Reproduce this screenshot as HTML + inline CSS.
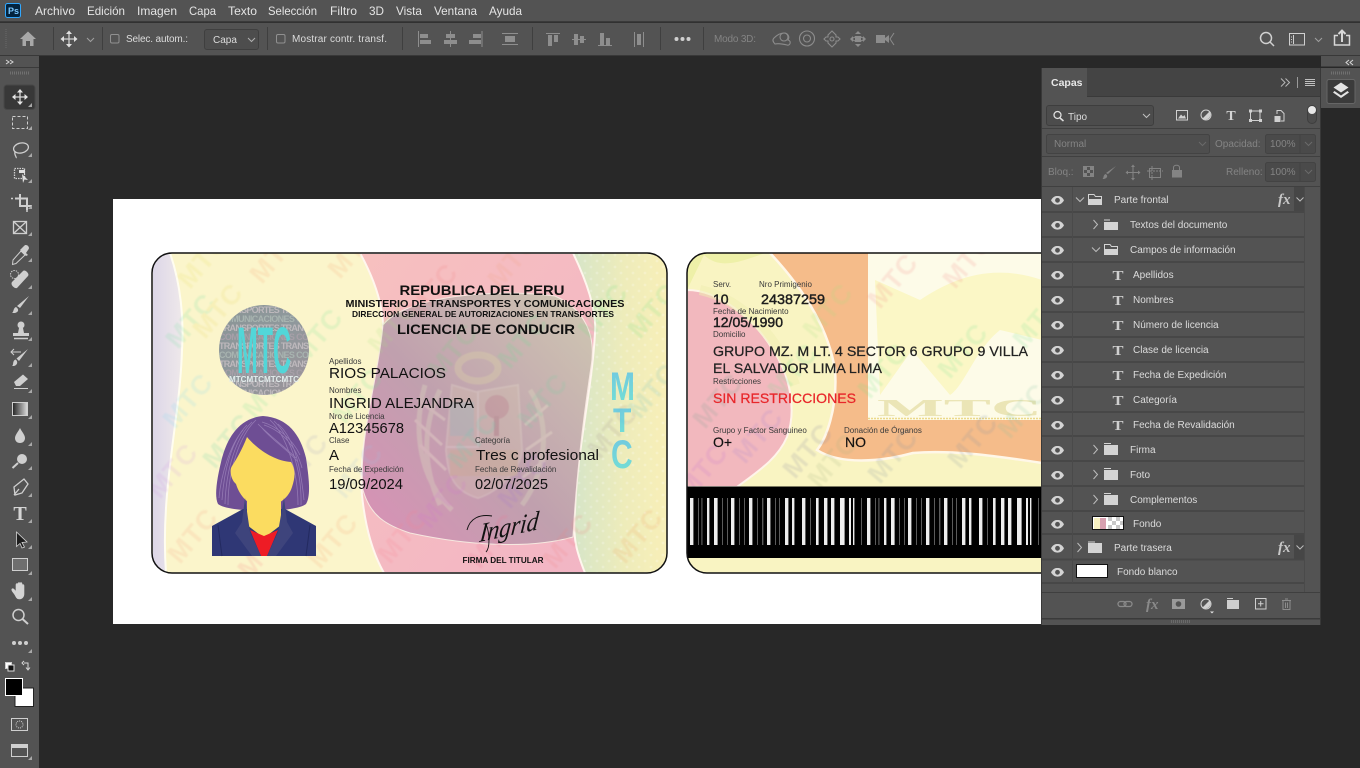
<!DOCTYPE html>
<html lang="es"><head><meta charset="utf-8"><title>Photoshop</title>
<style>
html,body{margin:0;padding:0;background:#282828;width:1360px;height:768px;overflow:hidden}
svg{display:block;position:absolute;left:0;top:0}
text{font-family:"Liberation Sans",sans-serif}
.m{font-size:12px;fill:#e4e4e4}
.o{font-size:10px;fill:#dcdcdc}
.d{font-size:10px;fill:#848484}
.l{font-size:10px;fill:#dcdcdc}
.lab{font-size:8px;fill:#3a3a3a}
.val{font-size:15px;fill:#111}
.i{fill:none;stroke:#cfcfcf;stroke-width:1.3}
.sep{stroke:#3f3f3f;stroke-width:1}
.wf text{font-size:27px;font-weight:700;letter-spacing:1px}
.sf{font-family:"Liberation Serif",serif}
</style></head><body>
<svg width="1360" height="768" viewBox="0 0 1360 768" xmlns="http://www.w3.org/2000/svg">
<defs>
<clipPath id="cf"><rect x="152" y="253" width="515" height="320" rx="20"/></clipPath>
<clipPath id="cb"><rect x="687" y="253" width="500" height="320" rx="20"/></clipPath>
<clipPath id="hc"><circle cx="264" cy="350" r="45"/></clipPath>
<linearGradient id="mv" x1="0" y1="1" x2="1" y2="0"><stop offset="0" stop-color="#da90b6"/><stop offset=".45" stop-color="#c0a0ae"/><stop offset="1" stop-color="#cfc8b2"/></linearGradient>
<linearGradient id="pk" x1="0" y1="0" x2="1" y2="1"><stop offset="0" stop-color="#f7c0bf"/><stop offset="1" stop-color="#f2b5c5"/></linearGradient>
<linearGradient id="rg" x1="0" y1="0" x2="1" y2="0"><stop offset="0" stop-color="#d6e5c8"/><stop offset=".55" stop-color="#eeecba"/><stop offset="1" stop-color="#f8efb8"/></linearGradient>
<linearGradient id="lv" x1="0" y1="0" x2="1" y2="0"><stop offset="0" stop-color="#dcd6e8"/><stop offset="1" stop-color="#efe9ea"/></linearGradient>
<linearGradient id="mt" x1="0" y1="0" x2="0" y2="1"><stop offset="0" stop-color="#5cc0e8"/><stop offset="1" stop-color="#5fe0d8"/></linearGradient>
<linearGradient id="hg" x1="0" y1="0" x2="1" y2="1"><stop offset="0" stop-color="#8a9596"/><stop offset=".5" stop-color="#8f989c"/><stop offset="1" stop-color="#9c9298"/></linearGradient>
<linearGradient id="grd" x1="0" y1="0" x2="1" y2="0"><stop offset="0" stop-color="#222"/><stop offset="1" stop-color="#ddd"/></linearGradient>
<pattern id="dots" patternUnits="userSpaceOnUse" width="12" height="12"><circle cx="3" cy="3" r="1.4" fill="#fff" opacity=".22"/><circle cx="9" cy="9" r="1.4" fill="#fff" opacity=".22"/></pattern>
<pattern id="bc" patternUnits="userSpaceOnUse" x="690" y="498" width="177" height="47">
<rect width="177" height="47" fill="#000"/>
<g fill="#eee"><rect x="0" width="3.4" height="47"/><rect x="17" width="2.4" height="47"/><rect x="24" width="3.6" height="47"/><rect x="41" width="3.4" height="47"/><rect x="59" width="3.4" height="47"/><rect x="77" width="3.4" height="47"/><rect x="95" width="3.4" height="47"/><rect x="102" width="2.4" height="47"/><rect x="112" width="3.4" height="47"/><rect x="126" width="2.6" height="47"/><rect x="134" width="3.4" height="47"/><rect x="141" width="3.4" height="47"/><rect x="150" width="4.6" height="47"/><rect x="159" width="2" height="47"/><rect x="163" width="1.4" height="47"/></g>
<g fill="#5a5a5a"><rect x="8" width="1" height="47"/><rect x="11.300" width="1.2" height="47"/><rect x="32" width="1" height="47"/><rect x="37" width="1" height="47"/><rect x="49" width="1" height="47"/><rect x="54" width="1" height="47"/><rect x="67" width="1" height="47"/><rect x="72" width="1.4" height="47"/><rect x="85" width="1" height="47"/><rect x="89" width="1" height="47"/><rect x="120" width="1" height="47"/><rect x="171" width="1" height="47"/></g>
</pattern>
</defs>

<!-- app chrome -->
<rect width="1360" height="768" fill="#282828"/>
<rect width="1360" height="21" fill="#535353"/>
<rect y="21" width="1360" height="1.500" fill="#3a3a3a"/>
<rect y="23" width="1360" height="32" fill="#535353"/>
<rect y="55" width="1360" height="1" fill="#383838"/>
<rect x="0" y="56" width="39" height="712" fill="#535353"/>
<rect x="0" y="67" width="39" height="1" fill="#3a3a3a"/>

<!-- document -->
<rect x="113" y="199" width="930" height="425" fill="#fff"/>

<!-- FRONT CARD -->
<g clip-path="url(#cf)">
<rect x="152" y="253" width="515" height="320" fill="#fbf5cb"/>
<path d="M152 253L170 253C181 285 184 320 182 350C180 420 160 490 166 573L152 573Z" fill="url(#lv)" stroke="#fffdf0" stroke-width="2"/>
<path d="M573 253C586 280 597 310 595 333C592 370 580 410 578 450C576 490 572 520 575 540C577 555 580 565 585 573L667 573L667 253Z" fill="url(#rg)"/>
<rect x="578" y="253" width="89" height="320" fill="url(#dots)"/>
<path d="M360 253C372 275 385 305 383 335C378 385 358 440 362 495C365 525 372 552 384 573L585 573C578 555 572 540 575 510C577 450 592 390 595 333C597 310 586 280 573 253Z" fill="url(#pk)" stroke="#fff6ee" stroke-width="2"/>
<path d="M383 325C405 296 495 288 555 296C582 308 597 332 591 367C583 420 576 480 573 537C530 549 470 546 410 533C385 525 370 515 363 490C358 440 378 380 383 325Z" fill="url(#mv)" stroke="#f6e8e0" stroke-width="1"/>
<!-- crest -->
<g opacity=".32" fill="none" stroke="#d9cda0" stroke-width="2" filter="blur(.5px)">
<ellipse cx="478" cy="368" rx="20" ry="13" stroke-width="7" stroke="#e0d8a8"/>
<path d="M452 385L476 392L518 385L522 450C520 470 498 492 478 498C450 490 448 470 446 450Z" fill="#d8c6b0" stroke="#e6dccb"/>
<path d="M478 392L478 447L446 447" stroke="#efe7d8"/>
<circle cx="497" cy="407" r="12" fill="#c48b8b" stroke="none"/>
<rect x="494" y="416" width="5" height="20" fill="#b27878" stroke="none"/>
<rect x="450" y="402" width="24" height="34" fill="#a8cdbf" stroke="none"/>
<rect x="450" y="450" width="68" height="26" fill="#d9c28e" stroke="none"/>
<path d="M440 390C425 420 420 460 440 505M425 385C412 430 420 480 452 510M530 390C550 420 548 470 522 505" stroke="#dfe0c2" stroke-width="5"/>
<path d="M418 400L445 420M415 420L442 445M420 445L446 470M548 405L525 425M552 432L526 450M545 460L522 478" stroke="#efe6d0" stroke-width="3"/>
</g>
<!-- watermarks -->
<g class="wf" opacity=".17" filter="blur(.7px)">
<text transform="translate(190 290) rotate(-50)" fill="#e8e060">MTC</text>
<text transform="translate(262 285) rotate(-50)" fill="#f8a070">MTC</text>
<text transform="translate(340 280) rotate(-50)" fill="#f4a070">MTC</text>
<text transform="translate(178 350) rotate(-50)" fill="#70e0a0">MTC</text>
<text transform="translate(205 340) rotate(-50)" fill="#e8d860">MTC</text>
<text transform="translate(305 365) rotate(-50)" fill="#70e090">MTC</text>
<text transform="translate(380 355) rotate(-50)" fill="#a8e080">MTC</text>
<text transform="translate(175 430) rotate(-50)" fill="#80d8f0">MTC</text>
<text transform="translate(255 420) rotate(-50)" fill="#70e090">MTC</text>
<text transform="translate(345 425) rotate(-50)" fill="#70e090">MTC</text>
<text transform="translate(215 470) rotate(-50)" fill="#60d0a0">MTC</text>
<text transform="translate(160 500) rotate(-50)" fill="#d098e0">MTC</text>
<text transform="translate(290 490) rotate(-50)" fill="#a0a0c0">MTC</text>
<text transform="translate(345 500) rotate(-50)" fill="#a0c0e0">MTC</text>
<text transform="translate(180 565) rotate(-50)" fill="#f8a080">MTC</text>
<text transform="translate(250 580) rotate(-50)" fill="#f88080">MTC</text>
<text transform="translate(320 570) rotate(-50)" fill="#f8a070">MTC</text>
<text transform="translate(390 565) rotate(-50)" fill="#f88090">MTC</text>
<text transform="translate(420 320) rotate(-50)" fill="#f08080">MTC</text>
<text transform="translate(500 290) rotate(-50)" fill="#f0a080">MTC</text>
<text transform="translate(440 380) rotate(-50)" fill="#70d080">MTC</text>
<text transform="translate(510 370) rotate(-50)" fill="#60e090">MTC</text>
<text transform="translate(590 340) rotate(-50)" fill="#70e080">MTC</text>
<text transform="translate(640 340) rotate(-50)" fill="#70e080">MTC</text>
<text transform="translate(460 470) rotate(-50)" fill="#60d0b0">MTC</text>
<text transform="translate(530 430) rotate(-50)" fill="#70d0a0">MTC</text>
<text transform="translate(600 460) rotate(-50)" fill="#a09090">MTC</text>
<text transform="translate(640 420) rotate(-50)" fill="#70c0c0">MTC</text>
<text transform="translate(430 530) rotate(-50)" fill="#d070d0">MTC</text>
<text transform="translate(510 510) rotate(-50)" fill="#a070d0">MTC</text>
<text transform="translate(480 570) rotate(-50)" fill="#f07090">MTC</text>
<text transform="translate(555 570) rotate(-50)" fill="#f08080">MTC</text>
<text transform="translate(625 565) rotate(-50)" fill="#f0a060">MTC</text>
</g>
<!-- hologram -->
<circle cx="264" cy="350" r="45" fill="url(#hg)"/>
<g clip-path="url(#hc)" font-size="9" font-weight="700" fill="#bdb8bc">
<text x="219" y="313" textLength="90">TRANSPORTES TRANS</text>
<text x="219" y="322" fill="#a8b4b0" textLength="90">COMUNICACIONES CO</text>
<text x="219" y="331" textLength="90">TRANSPORTES TRANS</text>
<text x="219" y="340" fill="#a79fa8" textLength="90">COMUNICACIONES CO</text>
<text x="219" y="349" textLength="90">TRANSPORTES TRANS</text>
<text x="219" y="358" fill="#a8b4b0" textLength="90">COMUNICACIONES CO</text>
<text x="219" y="367" textLength="90">TRANSPORTES TRANS</text>
<text x="219" y="376" fill="#a79fa8" textLength="90">COMUNICACIONES CO</text>
<text x="219" y="387" textLength="90">TRANSPORTES TRANS</text>
<text x="219" y="396" textLength="90">COMUNICACIONES CO</text>
</g>
<text transform="translate(237 373) scale(1 3)" font-size="22" font-weight="700" fill="#52d6d8" textLength="54" lengthAdjust="spacingAndGlyphs">MTC</text>
<text x="229" y="382" font-size="8" font-weight="700" fill="#e2ecec" textLength="70" lengthAdjust="spacingAndGlyphs">MTCMTCMTCMTC</text>
<!-- avatar -->
<path d="M263 416C240 418 228 436 222 458C217 478 214 496 218 504C228 513 296 513 306 504C311 496 309 478 306 458C300 434 288 418 263 416Z" fill="#6e4e94"/>
<g stroke="#9a80b8" stroke-width=".8" fill="none" opacity=".85">
<path d="M247 425C232 440 224 470 222 500M252 422C236 437 226 470 225 504M256 420C240 435 228 470 228 505M243 430C230 445 221 475 219 498M278 424C292 436 300 460 304 500M270 420C286 435 298 470 298 505M274 421C290 436 302 470 301 505M264 425C280 430 296 445 302 468M262 428C272 440 288 450 298 462M262 422C276 426 292 438 300 455M258 424C270 436 286 448 296 458"/>
</g>
<path d="M247 437C258 450 275 461 291 462C296 470 295 478 292 487C288 500 275 507 263 507C250 507 240 497 236 484C231 480 229 470 232 466C236 460 242 450 247 437Z" fill="#fbdc60"/>
<path d="M212 526L243 509L285 509L316 526L316 556L212 556Z" fill="#2f3775"/>
<path d="M247 498L281 498L281 525L264 538L247 525Z" fill="#fbdc60"/>
<path d="M250 530L264 536L278 530L267 556L261 556Z" fill="#ee1c25"/>
<path d="M245 498L250 532L261 556L252 556L235 533L242 522Z" fill="#3e447c"/>
<path d="M284 498L278 532L267 556L276 556L293 533L287 522Z" fill="#3e447c"/>
<path d="M218 525L222 556M310 525L306 556" stroke="#232a60" fill="none"/>
<!-- MTC vertical -->
<g fill="url(#mt)" font-weight="700" opacity=".85">
<text transform="translate(610 400) scale(1 1.320)" font-size="30">M</text>
<text transform="translate(613 432) scale(1 1.150)" font-size="30" >T</text>
<text transform="translate(611 468) scale(1 1.320)" font-size="30">C</text>
</g>
</g>
<rect x="152" y="253" width="515" height="320" rx="20" fill="none" stroke="#111" stroke-width="1.500"/>
<!-- front text -->
<g filter="blur(.25px)">
<g fill="#111">
<text x="482" y="295" font-size="14" font-weight="700" text-anchor="middle" textLength="165" lengthAdjust="spacingAndGlyphs">REPUBLICA DEL PERU</text>
<text x="485" y="307" font-size="10.500" font-weight="700" text-anchor="middle" textLength="279" lengthAdjust="spacingAndGlyphs">MINISTERIO DE TRANSPORTES Y COMUNICACIONES</text>
<text x="483" y="317" font-size="8.500" font-weight="700" text-anchor="middle" textLength="262" lengthAdjust="spacingAndGlyphs">DIRECCION GENERAL DE AUTORIZACIONES EN TRANSPORTES</text>
<text x="486" y="334" font-size="14" font-weight="700" text-anchor="middle" textLength="178" lengthAdjust="spacingAndGlyphs">LICENCIA DE CONDUCIR</text>
</g>
<text x="329" y="364" class="lab">Apellidos</text>
<text x="329" y="378" class="val" textLength="117" lengthAdjust="spacingAndGlyphs">RIOS PALACIOS</text>
<text x="329" y="393" class="lab">Nombres</text>
<text x="329" y="408" class="val" textLength="145" lengthAdjust="spacingAndGlyphs">INGRID ALEJANDRA</text>
<text x="329" y="419" class="lab">Nro de Licencia</text>
<text x="329" y="433" class="val" textLength="75" lengthAdjust="spacingAndGlyphs">A12345678</text>
<text x="329" y="443" class="lab">Clase</text>
<text x="329" y="460" class="val">A</text>
<text x="329" y="472" class="lab">Fecha de Expedición</text>
<text x="329" y="489" class="val" textLength="74" lengthAdjust="spacingAndGlyphs">19/09/2024</text>
<text x="475" y="443" class="lab">Categoría</text>
<text x="476" y="460" class="val" textLength="123" lengthAdjust="spacingAndGlyphs">Tres c profesional</text>
<text x="475" y="472" class="lab">Fecha de Revalidación</text>
<text x="475" y="489" class="val" textLength="73" lengthAdjust="spacingAndGlyphs">02/07/2025</text>
<text x="503" y="563" font-size="8" font-weight="700" fill="#111" text-anchor="middle" textLength="81" lengthAdjust="spacingAndGlyphs">FIRMA DEL TITULAR</text>
</g>
<text class="sf" transform="translate(479 542) rotate(-12) skewX(-18)" font-style="italic" font-size="26" fill="#111" textLength="60" lengthAdjust="spacingAndGlyphs">Ingrid</text>
<path d="M467 530C470 518 480 514 492 516M486 524C490 534 490 548 486 552" fill="none" stroke="#111" stroke-width=".9"/>

<!-- BACK CARD -->
<g clip-path="url(#cb)">
<rect x="687" y="253" width="500" height="320" fill="#f9f4c2"/>
<path d="M687 253H770C800 285 828 325 835 370C838 410 825 440 817 450C840 465 880 462 913 453C950 450 990 455 1042 463L1200 470V253Z" fill="#f5bc8a"/>
<path d="M770 253C800 285 828 325 835 370C838 410 825 440 817 450C840 465 880 462 913 453C950 450 990 455 1042 463" fill="none" stroke="#fff7e8" stroke-width="2.500"/>
<rect x="868" y="253" width="320" height="167" fill="#fdfbe8"/>
<path d="M875 280L920 300C950 280 990 262 1042 280L1042 340L1000 330C975 350 965 385 950 395L912 350L880 395Z" fill="#fbf7c6"/>
<path d="M868 418.500H1042" stroke="#ecd98a" stroke-width="1.500" stroke-dasharray="2 1"/>
<text x="877" y="416" class="sf" font-size="24" font-weight="700" fill="#ebe5b6" textLength="165" lengthAdjust="spacingAndGlyphs">MTC</text>
<path d="M687 253H765C740 262 720 270 704 255L687 290Z" fill="#eef0a8"/>
<path d="M687 290C720 290 755 320 773 350C790 375 797 410 787 437C778 458 760 470 737 487H687Z" fill="#f2b8be" stroke="#fff4ea" stroke-width="2"/>
<path d="M700 290C745 300 780 340 795 385" fill="none" stroke="#f0eeb0" stroke-width="10" opacity=".5"/>
<g class="wf" opacity=".17" filter="blur(.7px)">
<text transform="translate(705 430) rotate(-50)" fill="#70a090">MTC</text>
<text transform="translate(745 465) rotate(-50)" fill="#a080d0">MTC</text>
<text transform="translate(795 480) rotate(-50)" fill="#8080a0">MTC</text>
<text transform="translate(780 400) rotate(-50)" fill="#70e090">MTC</text>
<text transform="translate(815 340) rotate(-50)" fill="#a0e080">MTC</text>
<text transform="translate(880 310) rotate(-50)" fill="#f08080">MTC</text>
<text transform="translate(955 290) rotate(-50)" fill="#f08080">MTC</text>
<text transform="translate(870 400) rotate(-50)" fill="#70e080">MTC</text>
<text transform="translate(950 380) rotate(-50)" fill="#70e090">MTC</text>
<text transform="translate(1025 350) rotate(-50)" fill="#70e090">MTC</text>
<text transform="translate(880 485) rotate(-50)" fill="#8090a0">MTC</text>
<text transform="translate(960 470) rotate(-50)" fill="#8090a0">MTC</text>
<text transform="translate(1010 440) rotate(-50)" fill="#80c0a0">MTC</text>
<text transform="translate(690 500) rotate(-50)" fill="#c070d0">MTC</text>
<text transform="translate(820 490) rotate(-50)" fill="#a0b080">MTC</text>
</g>
<rect x="687" y="486.500" width="500" height="71.500" fill="#000"/>
<rect x="688" y="498" width="500" height="47" fill="url(#bc)"/>
</g>
<rect x="687" y="253" width="500" height="320" rx="20" fill="none" stroke="#111" stroke-width="1.500"/>
<g filter="blur(.25px)">
<text x="713" y="287" class="lab">Serv.</text>
<text x="759" y="287" class="lab">Nro Primigenio</text>
<g fill="#1d1d1d" stroke="#1d1d1d" stroke-width=".45">
<text x="713" y="304" font-size="14">10</text>
<text x="761" y="304" font-size="14" textLength="64" lengthAdjust="spacingAndGlyphs">24387259</text>
<text x="713" y="327" font-size="14" textLength="70" lengthAdjust="spacingAndGlyphs">12/05/1990</text>
</g>
<text x="713" y="314" class="lab">Fecha de Nacimiento</text>
<text x="713" y="337" class="lab">Domicilio</text>
<g fill="#222" stroke="#222" stroke-width=".25">
<text x="713" y="356" font-size="14" textLength="315" lengthAdjust="spacingAndGlyphs">GRUPO MZ. M LT. 4 SECTOR 6 GRUPO 9 VILLA</text>
<text x="713" y="373" font-size="14" textLength="169" lengthAdjust="spacingAndGlyphs">EL SALVADOR LIMA LIMA</text>
</g>
<text x="713" y="384" class="lab">Restricciones</text>
<text x="713" y="403" font-size="14" fill="#e8262a" stroke="#e8262a" stroke-width=".25" textLength="143" lengthAdjust="spacingAndGlyphs">SIN RESTRICCIONES</text>
<text x="713" y="433" class="lab">Grupo y Factor Sanguineo</text>
<text x="844" y="433" class="lab">Donación de Órganos</text>
<text x="713" y="447" font-size="14" fill="#111" stroke="#111" stroke-width=".2">O+</text>
<text x="845" y="447" font-size="14" fill="#111" stroke="#111" stroke-width=".2">NO</text>
</g>

<!-- MENU -->
<rect x="5.500" y="3.500" width="15" height="14" rx="2" fill="#03243f" stroke="#31a8ff"/>
<text x="8" y="14" font-size="9" font-weight="700" fill="#7cc8ff">Ps</text>
<text x="35" y="15" class="m" textLength="40" lengthAdjust="spacingAndGlyphs">Archivo</text><text x="87" y="15" class="m" textLength="38" lengthAdjust="spacingAndGlyphs">Edición</text><text x="137" y="15" class="m" textLength="40" lengthAdjust="spacingAndGlyphs">Imagen</text><text x="189" y="15" class="m" textLength="27" lengthAdjust="spacingAndGlyphs">Capa</text><text x="228" y="15" class="m" textLength="29" lengthAdjust="spacingAndGlyphs">Texto</text><text x="268" y="15" class="m" textLength="49" lengthAdjust="spacingAndGlyphs">Selección</text><text x="330" y="15" class="m" textLength="27" lengthAdjust="spacingAndGlyphs">Filtro</text><text x="369" y="15" class="m" textLength="15" lengthAdjust="spacingAndGlyphs">3D</text><text x="396" y="15" class="m" textLength="26" lengthAdjust="spacingAndGlyphs">Vista</text><text x="434" y="15" class="m" textLength="43" lengthAdjust="spacingAndGlyphs">Ventana</text><text x="489" y="15" class="m" textLength="33" lengthAdjust="spacingAndGlyphs">Ayuda</text>

<!-- OPTIONS BAR -->
<path d="M6 29V49" stroke="#6a6a6a" stroke-dasharray="1 1"/>
<path d="M20 39L28 31.500L36 39H33.500V46H30V41H26V46H22.500V39Z" fill="#a8a8a8"/>
<g class="sep"><path d="M53.500 27V50M102.500 27V50M267.500 27V50M402.500 27V50M532.500 27V50M660.500 27V50M703.500 27V50"/></g>
<g class="i"><path d="M69 32V46M62 39H76"/></g>
<path d="M69 30.500L66 34H72ZM69 47.500L66 44H72ZM60.500 39L64 36V42ZM77.500 39L74 36V42Z" fill="#e0e0e0"/>
<path d="M87 38L90.500 41.500L94 38" fill="none" stroke="#a0a0a0"/>
<rect x="110.500" y="34.500" width="8.500" height="8.500" rx="1.500" fill="none" stroke="#909090"/>
<text x="126" y="42" class="o" textLength="62">Selec. autom.:</text>
<rect x="204.500" y="29.500" width="54" height="20" rx="2.500" fill="#4d4d4d" stroke="#3f3f3f"/>
<text x="213" y="43" class="o">Capa</text>
<path d="M248 38L251.500 41.500L255 38" fill="none" stroke="#b0b0b0"/>
<rect x="276.500" y="34.500" width="8.500" height="8.500" rx="1.500" fill="none" stroke="#909090"/>
<text x="292" y="42" class="o" textLength="95">Mostrar contr. transf.</text>
<g fill="#8e8e8e">
<path d="M418.500 31V47" stroke="#8e8e8e" fill="none"/><rect x="420" y="34" width="8" height="4"/><rect x="420" y="40" width="11" height="4"/>
<path d="M450.500 31V47" stroke="#8e8e8e" fill="none"/><rect x="446" y="34" width="9" height="4"/><rect x="444" y="40" width="13" height="4"/>
<path d="M482 31V47" stroke="#8e8e8e" fill="none"/><rect x="473" y="34" width="8" height="4"/><rect x="469" y="40" width="12" height="4"/>
<path d="M502 33.500H518M502 44.500H518" stroke="#8e8e8e" fill="none"/><rect x="505" y="36" width="10" height="6"/>
<path d="M546 33.500H560" stroke="#8e8e8e" fill="none"/><rect x="548" y="35" width="4" height="11"/><rect x="554" y="35" width="4" height="7"/>
<path d="M572 39.500H586" stroke="#8e8e8e" fill="none"/><rect x="574" y="34" width="4" height="11"/><rect x="580" y="36" width="4" height="7"/>
<path d="M598 45.500H612" stroke="#8e8e8e" fill="none"/><rect x="600" y="33" width="4" height="12"/><rect x="606" y="38" width="4" height="7"/>
<path d="M634.500 32V47M643.500 32V47" stroke="#8e8e8e" fill="none"/><rect x="637" y="34" width="4" height="11"/>
</g>
<g fill="#d0d0d0"><circle cx="676.500" cy="39" r="2"/><circle cx="682.500" cy="39" r="2"/><circle cx="688.500" cy="39" r="2"/></g>
<text x="714" y="42" class="d" textLength="42">Modo 3D:</text>
<g fill="none" stroke="#8c8c8c" stroke-width="1.100">
<path d="M774 38C778 34 781 33 784 33C788 33 790 37 788 40C792 41 790 46 787 45C783 44 779 43 775 44C773 42 772 40 774 38Z"/><circle cx="784" cy="37" r="4"/>
<circle cx="807" cy="38.500" r="7.500"/><circle cx="807" cy="38.500" r="3.500"/>
<path d="M832 31L836 35V37H838L840 39L838 41H836V43L832 47L828 43V41H826L824 39L826 37H828V35Z"/><circle cx="832" cy="39" r="2"/>
<path d="M851 39L855 37M865 39L861 37M855 41L851 39M861 41L865 39"/>
</g>
<g fill="#8c8c8c"><rect x="855" y="36" width="6" height="6"/><path d="M858 31L855 34H861ZM858 47L855 44H861ZM850 39L853 36V42ZM866 39L863 36V42Z"/>
<rect x="876" y="35" width="9" height="8"/><path d="M885 38L889 35V43L885 40Z"/></g>
<path d="M894 33L890 39L894 45" fill="none" stroke="#8c8c8c"/>
<g fill="none" stroke="#d0d0d0" stroke-width="1.500"><circle cx="1266" cy="38" r="5.500"/><path d="M1270 42L1274 46"/></g>
<rect x="1289.500" y="33.500" width="15" height="11.500" fill="none" stroke="#d0d0d0"/>
<path d="M1293.500 35V44" stroke="#d0d0d0"/><path d="M1291 37h1M1291 39.500h1M1291 42h1" stroke="#d0d0d0"/>
<path d="M1315 38L1318.500 41.500L1322 38" fill="none" stroke="#a0a0a0"/>
<path d="M1338 35.500H1334.500V45H1349.500V35.500H1346" fill="none" stroke="#d8d8d8" stroke-width="1.500"/>
<path d="M1342 42V32M1338.500 34L1342 30.500L1345.500 34" fill="none" stroke="#d8d8d8" stroke-width="2"/>

<!-- LEFT TOOLS -->
<path d="M6 60L9 62L6 64M10 60L13 62L10 64" fill="none" stroke="#d8d8d8"/>
<path d="M10 73H29" stroke="#707070" stroke-width="3" stroke-dasharray="1 1"/>
<rect x="4" y="85" width="31" height="24.500" rx="3" fill="#383838" stroke="#474747"/>
<g class="i" style="stroke:#d8d8d8"><path d="M20 91V103M13.500 97H26.500"/></g>
<path d="M20 89L17 92.500H23ZM20 105L17 101.500H23ZM12 97L15.500 94V100ZM28 97L24.500 94V100Z" fill="#e6e6e6"/>
<rect x="12.500" y="116.500" width="15" height="12" fill="none" stroke="#cfcfcf" stroke-dasharray="3 2"/>
<g class="i"><ellipse cx="21" cy="148" rx="7.500" ry="5" transform="rotate(-12 21 148)"/><path d="M15 152C14 155 17 157 16 158"/>
<rect x="14.500" y="168.500" width="10" height="10" stroke-dasharray="1.500 1"/>
<path d="M15 198.500H27V210M20 194V206H32" stroke-width="2"/><path d="M11 198.500H13M27 206V212" stroke-width="1.500"/>
<rect x="13.500" y="221.500" width="13" height="12"/><path d="M13.500 221.500L26.500 233.500M26.500 221.500L13.500 233.500"/></g>
<path d="M19 170H25V176L24 173H19ZM22 174L28 180L24.500 179.500L23 183Z" fill="#e0e0e0"/>
<path d="M21 251L25 255L16 263.500L12.500 264.500L13 260Z" fill="none" stroke="#cfcfcf"/><path d="M20 250L24 246C26 243 31 247 28 250L26 253L28 255L26 256L19 249Z" fill="#cfcfcf"/>
<path d="M12 282L23 271C25 269 30 274 28 276L17 288C15 289 10 285 12 282Z" fill="#cfcfcf"/><circle cx="14.500" cy="274.500" r="4" fill="none" stroke="#cfcfcf" stroke-dasharray="1.500 1"/>
<path d="M29 296L20 308L17 306Z" fill="#cfcfcf"/><path d="M16 307C19 309 19 312 15 313H12C14 312 13 308 16 307Z" fill="#cfcfcf"/>
<circle cx="21" cy="325" r="3.500" fill="#cfcfcf"/><path d="M19 328H23L24 333H29V336H13V333H18Z" fill="#cfcfcf"/><path d="M14 338.500H28" stroke="#cfcfcf" stroke-width="1.500"/>
<path d="M28 349L19 361L16.500 358.500Z" fill="#cfcfcf"/><path d="M15.500 359.500C18 361 18 365 14 366H12C14 365 12 361 15.500 359.500Z" fill="#cfcfcf"/><path d="M11 352H21M14 349L11 352L14 355" fill="none" stroke="#cfcfcf"/>
<path d="M14 382L23 374.500L28 379L20 386H16Z" fill="#cfcfcf"/><path d="M14 388.500H28" stroke="#cfcfcf"/>
<rect x="12.500" y="402.500" width="15" height="13" fill="url(#grd)" stroke="#cfcfcf"/>
<path d="M20 428C22 432 25 435 25 438C25 441 23 443 20 443C17 443 15 441 15 438C15 435 18 432 20 428Z" fill="#cfcfcf"/>
<circle cx="22" cy="459" r="5" fill="#cfcfcf"/><path d="M18 463L12.500 468" stroke="#cfcfcf" stroke-width="2"/>
<path d="M24 479L28 484L22 493L15 495L14 487ZM14 495L19 489" fill="none" stroke="#cfcfcf" stroke-width="1.300"/>
<text x="20" y="520" class="sf" font-size="20" font-weight="700" fill="#d4d4d4" text-anchor="middle">T</text>
<path d="M16.500 532L27 542L22 542.500L24.500 547L22 548L20 543.500L16.500 546.500Z" fill="#1e1e1e" stroke="#d4d4d4" stroke-width=".8"/>
<rect x="12.500" y="558.500" width="15" height="12" fill="#6e6e6e" stroke="#cfcfcf"/>
<path d="M15 595C13 592 11 590 12 589C13 588 15 590 16 592V585C16 583 18 583 18 585V589V584C18 582 20 582 20 584V589V584C20 582 22 582 22 584V590V586C22 584 24 584 24 586L24 594C24 597 22 599 19 599C17 599 16 597 15 595Z" fill="#d4d4d4" stroke="#d4d4d4" stroke-width=".6"/>
<circle cx="18.500" cy="615" r="5.500" fill="none" stroke="#cfcfcf" stroke-width="1.500"/><path d="M22.500 619L28 624" stroke="#cfcfcf" stroke-width="2"/>
<g fill="#cfcfcf"><circle cx="14" cy="643" r="2"/><circle cx="20" cy="643" r="2"/><circle cx="26" cy="643" r="2"/></g>
<g fill="#a8a8a8">
<path d="M32 126V130H28ZM32 153V157H28ZM32 179V183H28ZM32 205V209H28ZM32 232V236H28ZM32 258V262H28ZM32 285V289H28ZM32 311V315H28ZM32 337V341H28ZM32 363V367H28ZM32 389V393H28ZM32 415V419H28ZM32 442V446H28ZM32 466V470H28ZM32 493V497H28ZM32 519V523H28ZM32 545V549H28ZM32 571V575H28ZM32 597V601H28ZM32 649V653H28ZM32 756V760H28ZM32 103V107H28Z"/>
</g>
<rect x="5.500" y="662.500" width="6" height="6" fill="#fff" stroke="#ccc"/><rect x="8" y="665" width="6" height="6" fill="#111" stroke="#ddd"/>
<path d="M24 663H28V669M26 667.500L28 670L30 667.500M24 661L22 663L24 665" fill="none" stroke="#d8d8d8"/>
<rect x="15" y="688" width="18.500" height="18.500" fill="#fff" stroke="#222"/>
<rect x="5.500" y="678.500" width="17" height="17" fill="#000" stroke="#fff"/>
<rect x="11.500" y="718.500" width="16" height="12" fill="none" stroke="#cfcfcf"/><circle cx="19.500" cy="724.500" r="3.500" fill="none" stroke="#cfcfcf" stroke-dasharray="1 1"/>
<rect x="11.500" y="744.500" width="16" height="12" fill="none" stroke="#cfcfcf"/><rect x="12" y="745" width="15" height="3" fill="#cfcfcf"/>

<!-- RIGHT DOCK -->
<rect x="1321" y="56" width="39" height="10.500" fill="#535353"/>
<rect x="1321" y="68" width="39" height="40" fill="#535353"/>
<path d="M1349 60L1346 62.500L1349 65M1353 60L1350 62.500L1353 65" fill="none" stroke="#d8d8d8"/>
<path d="M1331 73H1350" stroke="#707070" stroke-width="3" stroke-dasharray="1 1"/>
<rect x="1327" y="79.500" width="28" height="24" rx="2" fill="#3b3b3b" stroke="#666"/>
<path d="M1341 82.500L1348.500 87.500L1341 92.500L1333.500 87.500ZM1334.500 91L1341 95.500L1347.500 91L1349 92.500L1341 98L1333 92.500Z" fill="#e4e4e4"/>

<!-- PANEL -->
<rect x="1042" y="68" width="279" height="557" fill="#535353"/>
<rect x="1042" y="68" width="279" height="28.500" fill="#444"/>
<rect x="1042" y="68" width="45" height="29" fill="#535353"/>
<path d="M1087 96.500H1320" stroke="#3a3a3a"/>
<path d="M1041.500 68V625M1320.500 68V625" stroke="#383838"/>
<text x="1051" y="86" font-size="10.500" font-weight="700" fill="#e8e8e8">Capas</text>
<path d="M1281 78.500L1285 82.500L1281 86.500M1285.500 78.500L1289.500 82.500L1285.500 86.500" fill="none" stroke="#b8b8b8"/>
<path d="M1297.500 77V88" stroke="#9a9a9a"/>
<path d="M1305 79.500h10M1305 81.500h10M1305 83.500h10M1305 85.500h10" stroke="#c0c0c0"/>
<rect x="1046.500" y="105.500" width="107" height="20" rx="2.500" fill="#4c4c4c" stroke="#3e3e3e"/>
<circle cx="1057.500" cy="115" r="3.500" fill="none" stroke="#e0e0e0" stroke-width="1.300"/><path d="M1060 118L1063.500 121" stroke="#e0e0e0" stroke-width="1.500"/>
<text x="1068" y="120" class="l">Tipo</text>
<path d="M1143 114L1146.500 117.500L1150 114" fill="none" stroke="#c0c0c0"/>
<rect x="1176.500" y="110.500" width="11" height="9.500" fill="none" stroke="#d0d0d0"/><path d="M1178 118.500L1181 114.500L1183 116.500L1184.500 115L1186 118.500Z" fill="#d0d0d0"/>
<circle cx="1206" cy="115" r="5" fill="none" stroke="#d0d0d0"/><path d="M1209.500 111.500A5 5 0 0 1 1202.500 118.500Z" fill="#d0d0d0"/>
<text x="1231" y="120" class="sf" font-size="14" font-weight="700" fill="#d4d4d4" text-anchor="middle">T</text>
<rect x="1250.500" y="111" width="9.500" height="9.500" fill="none" stroke="#d0d0d0"/><path d="M1249 109.500h3v3h-3zM1259 109.500h3v3h-3zM1249 119h3v3h-3zM1259 119h3v3h-3z" fill="#d0d0d0"/>
<path d="M1277 114V110.500H1281L1284 113.500V121H1281" fill="none" stroke="#d0d0d0"/><rect x="1274.500" y="116" width="6" height="6" fill="#d0d0d0"/>
<rect x="1307.500" y="105.500" width="9" height="18" rx="4.500" fill="#4c4c4c" stroke="#3e3e3e"/><circle cx="1312" cy="110" r="4" fill="#e8e8e8"/>
<path d="M1042 128.500H1320M1042 156.500H1320M1042 186.500H1320" stroke="#404040"/>
<rect x="1046.500" y="134.500" width="163" height="19" rx="2" fill="#4e4e4e" stroke="#434343"/>
<text x="1054" y="147" class="d">Normal</text>
<path d="M1199 142L1202.500 145.500L1206 142" fill="none" stroke="#6a6a6a"/>
<text x="1215" y="147" class="d">Opacidad:</text>
<rect x="1265.500" y="134.500" width="50" height="19" rx="2" fill="#4a4a4a" stroke="#434343"/><path d="M1300 135V153" stroke="#434343"/>
<text x="1270" y="147" class="d">100%</text>
<path d="M1305 142L1308.500 145.500L1312 142" fill="none" stroke="#6a6a6a"/>
<text x="1048" y="175" class="d">Bloq.:</text>
<rect x="1083.500" y="166.500" width="10" height="10" fill="none" stroke="#848484"/>
<path d="M1084 167h3v3h-3zM1090 167h3v3h-3zM1087 170h3v3h-3zM1084 173h3v3h-3zM1090 173h3v3h-3z" fill="#848484"/>
<path d="M1116 166L1108 174L1106 173ZM1105.500 174C1108 175 1108 178 1104 179H1102.500C1104 178 1103 175 1105.500 174Z" fill="#848484"/>
<g fill="none" stroke="#848484"><path d="M1133 166.500V178.500M1127 172.500H1139"/>
<rect x="1149.500" y="168.500" width="11" height="9"/><path d="M1147 171H1163M1152 166V181" stroke-dasharray="2 1"/>
<path d="M1173.500 170V167.500C1173.500 164.500 1179.500 164.500 1179.500 167.500V170"/></g>
<path d="M1133 164.500L1131 167H1135ZM1133 180.500L1131 178H1135ZM1125.500 172.500L1128 170.500V174.500ZM1140.500 172.500L1138 170.500V174.500Z" fill="#848484"/>
<rect x="1172" y="170" width="10" height="7.500" fill="#848484"/>
<text x="1226" y="175" class="d">Relleno:</text>
<rect x="1265.500" y="162.500" width="50" height="19" rx="2" fill="#4a4a4a" stroke="#434343"/><path d="M1300 163V181" stroke="#434343"/>
<text x="1270" y="175" class="d">100%</text>
<path d="M1305 170L1308.500 173.500L1312 170" fill="none" stroke="#6a6a6a"/>
<!-- row separators -->
<g stroke="#474747" stroke-width="2">
<path d="M1042 212H1304M1042 237H1304M1042 262H1304M1042 287H1304M1042 312H1304M1042 337H1304M1042 362H1304M1042 387H1304M1042 412H1304M1042 436H1304M1042 461H1304M1042 486H1304M1042 511H1304M1042 534H1304M1042 559.500H1304M1042 583H1304"/>
</g>
<path d="M1072.500 187V583" stroke="#4a4a4a"/>
<path d="M1304.500 187V592" stroke="#4a4a4a"/>
<rect x="1294" y="187" width="10" height="24" fill="#464646"/>
<rect x="1294" y="535" width="10" height="24" fill="#464646"/>
<!-- eyes -->
<g fill="#d4d4d4">
<path d="M1051 200.300C1053 196.800 1055 196 1057.500 196C1060 196 1062 196.800 1064 200.300C1062 203.800 1060 204.600 1057.500 204.600C1055 204.600 1053 203.800 1051 200.300Z"/>
<path d="M1051 225.300C1053 221.800 1055 221 1057.500 221C1060 221 1062 221.800 1064 225.300C1062 228.800 1060 229.600 1057.500 229.600C1055 229.600 1053 228.800 1051 225.300Z"/>
<path d="M1051 250.300C1053 246.800 1055 246 1057.500 246C1060 246 1062 246.800 1064 250.300C1062 253.800 1060 254.600 1057.500 254.600C1055 254.600 1053 253.800 1051 250.300Z"/>
<path d="M1051 275.300C1053 271.800 1055 271 1057.500 271C1060 271 1062 271.800 1064 275.300C1062 278.800 1060 279.600 1057.500 279.600C1055 279.600 1053 278.800 1051 275.300Z"/>
<path d="M1051 300.300C1053 296.800 1055 296 1057.500 296C1060 296 1062 296.800 1064 300.300C1062 303.800 1060 304.600 1057.500 304.600C1055 304.600 1053 303.800 1051 300.300Z"/>
<path d="M1051 325.300C1053 321.800 1055 321 1057.500 321C1060 321 1062 321.800 1064 325.300C1062 328.800 1060 329.600 1057.500 329.600C1055 329.600 1053 328.800 1051 325.300Z"/>
<path d="M1051 350.300C1053 346.800 1055 346 1057.500 346C1060 346 1062 346.800 1064 350.300C1062 353.800 1060 354.600 1057.500 354.600C1055 354.600 1053 353.800 1051 350.300Z"/>
<path d="M1051 375.300C1053 371.800 1055 371 1057.500 371C1060 371 1062 371.800 1064 375.300C1062 378.800 1060 379.600 1057.500 379.600C1055 379.600 1053 378.800 1051 375.300Z"/>
<path d="M1051 400.300C1053 396.800 1055 396 1057.500 396C1060 396 1062 396.800 1064 400.300C1062 403.800 1060 404.600 1057.500 404.600C1055 404.600 1053 403.800 1051 400.300Z"/>
<path d="M1051 425.300C1053 421.800 1055 421 1057.500 421C1060 421 1062 421.800 1064 425.300C1062 428.800 1060 429.600 1057.500 429.600C1055 429.600 1053 428.800 1051 425.300Z"/>
<path d="M1051 450.300C1053 446.800 1055 446 1057.500 446C1060 446 1062 446.800 1064 450.300C1062 453.800 1060 454.600 1057.500 454.600C1055 454.600 1053 453.800 1051 450.300Z"/>
<path d="M1051 475.300C1053 471.800 1055 471 1057.500 471C1060 471 1062 471.800 1064 475.300C1062 478.800 1060 479.600 1057.500 479.600C1055 479.600 1053 478.800 1051 475.300Z"/>
<path d="M1051 500.300C1053 496.800 1055 496 1057.500 496C1060 496 1062 496.800 1064 500.300C1062 503.800 1060 504.600 1057.500 504.600C1055 504.600 1053 503.800 1051 500.300Z"/>
<path d="M1051 524.300C1053 520.800 1055 520 1057.500 520C1060 520 1062 520.800 1064 524.300C1062 527.800 1060 528.600 1057.500 528.600C1055 528.600 1053 527.800 1051 524.300Z"/>
<path d="M1051 548.300C1053 544.800 1055 544 1057.500 544C1060 544 1062 544.800 1064 548.300C1062 551.800 1060 552.600 1057.500 552.600C1055 552.600 1053 551.800 1051 548.300Z"/>
<path d="M1051 572.300C1053 568.800 1055 568 1057.500 568C1060 568 1062 568.800 1064 572.300C1062 575.800 1060 576.600 1057.500 576.600C1055 576.600 1053 575.800 1051 572.300Z"/>
</g>
<g fill="#535353"><circle cx="1057.500" cy="200.300" r="2.400"/><circle cx="1057.500" cy="225.300" r="2.400"/><circle cx="1057.500" cy="250.300" r="2.400"/><circle cx="1057.500" cy="275.300" r="2.400"/><circle cx="1057.500" cy="300.300" r="2.400"/><circle cx="1057.500" cy="325.300" r="2.400"/><circle cx="1057.500" cy="350.300" r="2.400"/><circle cx="1057.500" cy="375.300" r="2.400"/><circle cx="1057.500" cy="400.300" r="2.400"/><circle cx="1057.500" cy="425.300" r="2.400"/><circle cx="1057.500" cy="450.300" r="2.400"/><circle cx="1057.500" cy="475.300" r="2.400"/><circle cx="1057.500" cy="500.300" r="2.400"/><circle cx="1057.500" cy="524.300" r="2.400"/><circle cx="1057.500" cy="548.300" r="2.400"/><circle cx="1057.500" cy="572.300" r="2.400"/></g>
<!-- chevrons -->
<g fill="none" stroke="#bdbdbd">
<path d="M1076 197.500L1080 201.500L1084 197.500"/>
<path d="M1093.500 220L1097.500 224.500L1093.500 229"/>
<path d="M1092 247.500L1096 251.500L1100 247.500"/>
<path d="M1093.500 445L1097.500 449.500L1093.500 454"/>
<path d="M1093.500 470L1097.500 474.500L1093.500 479"/>
<path d="M1093.500 495L1097.500 499.500L1093.500 504"/>
<path d="M1077.500 543L1081.500 547.500L1077.500 552"/>
<path d="M1296.500 197.500L1300 201L1303.500 197.500"/>
<path d="M1296.500 545.500L1300 549L1303.500 545.500"/>
</g>
<!-- folders -->
<g fill="#d4d4d4">
<path d="M1104 219.500H1110V220.500H1104ZM1104 222H1118V230H1104Z"/>
<path d="M1104 445H1118V455H1104Z"/><path d="M1104 470H1118V480H1104Z"/><path d="M1104 495H1118V505H1104Z"/>
<path d="M1088 543H1102V553H1088Z"/>
<rect x="1104" y="443" width="7" height="1"/><rect x="1104" y="468" width="7" height="1"/><rect x="1104" y="493" width="7" height="1"/><rect x="1088" y="541.500" width="7" height="1"/>
</g>
<path d="M1088.500 204.500V194.500H1094L1095.500 196.500H1101.500V204.500Z" fill="none" stroke="#d4d4d4"/>
<path d="M1088 199H1102V205H1088Z" fill="#d4d4d4"/>
<path d="M1104.500 254.500V244.500H1110L1111.500 246.500H1117.500V254.500Z" fill="none" stroke="#d4d4d4"/>
<path d="M1104 249H1118V255H1104Z" fill="#d4d4d4"/>
<!-- labels -->
<text x="1114" y="203" class="l">Parte frontal</text>
<text x="1130" y="228" class="l">Textos del documento</text>
<text x="1130" y="253" class="l">Campos de información</text>
<text x="1133" y="278" class="l">Apellidos</text>
<text x="1133" y="303" class="l">Nombres</text>
<text x="1133" y="328" class="l">Número de licencia</text>
<text x="1133" y="353" class="l">Clase de licencia</text>
<text x="1133" y="378" class="l">Fecha de Expedición</text>
<text x="1133" y="403" class="l">Categoría</text>
<text x="1133" y="428" class="l">Fecha de Revalidación</text>
<text x="1130" y="453" class="l">Firma</text>
<text x="1130" y="478" class="l">Foto</text>
<text x="1130" y="503" class="l">Complementos</text>
<text x="1133" y="527" class="l">Fondo</text>
<text x="1114" y="551" class="l">Parte trasera</text>
<text x="1117" y="575" class="l">Fondo blanco</text>
<g font-size="14" font-weight="700" fill="#cfcfcf">
<text class="sf" x="1112.500" y="280" textLength="11" lengthAdjust="spacingAndGlyphs">T</text><text class="sf" x="1112.500" y="305" textLength="11" lengthAdjust="spacingAndGlyphs">T</text><text class="sf" x="1112.500" y="330" textLength="11" lengthAdjust="spacingAndGlyphs">T</text><text class="sf" x="1112.500" y="355" textLength="11" lengthAdjust="spacingAndGlyphs">T</text><text class="sf" x="1112.500" y="380" textLength="11" lengthAdjust="spacingAndGlyphs">T</text><text class="sf" x="1112.500" y="405" textLength="11" lengthAdjust="spacingAndGlyphs">T</text><text class="sf" x="1112.500" y="430" textLength="11" lengthAdjust="spacingAndGlyphs">T</text>
</g>
<g font-size="15" font-style="italic" font-weight="700" fill="#c8c8c8">
<text class="sf" x="1278" y="204">fx</text><text class="sf" x="1278" y="552">fx</text>
<text class="sf" x="1146" y="609" fill="#8a8a8a">fx</text>
</g>
<!-- thumbs -->
<rect x="1092.500" y="516.500" width="31" height="13" fill="#fff" stroke="#111"/>
<g fill="#c8c8c8"><rect x="1108" y="517" width="4" height="4"/><rect x="1116" y="517" width="4" height="4"/><rect x="1112" y="521" width="4" height="4"/><rect x="1120" y="521" width="3" height="4"/><rect x="1108" y="525" width="4" height="4"/><rect x="1116" y="525" width="4" height="4"/></g>
<rect x="1094" y="518" width="12" height="11" fill="#f6efc0"/><rect x="1100" y="518" width="6" height="11" fill="#d8a0b0"/>
<rect x="1076.500" y="564.500" width="31" height="13" fill="#fff" stroke="#111"/>
<!-- bottom bar -->
<path d="M1042 592.500H1320" stroke="#3f3f3f"/>
<rect x="1042" y="618" width="278" height="1.500" fill="#3a3a3a"/>
<path d="M1171 621.500H1190" stroke="#6a6a6a" stroke-width="3" stroke-dasharray="1 1"/>
<g fill="none" stroke="#8a8a8a" stroke-width="1.300"><rect x="1118" y="601.500" width="8" height="5" rx="2.500"/><rect x="1124" y="601.500" width="8" height="5" rx="2.500"/></g>
<path d="M1172 599H1185V609H1172Z" fill="#9a9a9a"/><circle cx="1178.500" cy="604" r="2.800" fill="#535353"/>
<circle cx="1206" cy="604" r="5" fill="none" stroke="#d0d0d0"/><path d="M1209.500 600.500A5 5 0 0 1 1202.500 607.500Z" fill="#d0d0d0"/>
<path d="M1210 611.500h4l-2 2z" fill="#e0e0e0"/>
<path d="M1227 600H1239V609H1227Z" fill="#cfcfcf"/><path d="M1227 598.500H1233" stroke="#cfcfcf"/>
<rect x="1255.500" y="598.500" width="10.500" height="10.500" fill="none" stroke="#cfcfcf"/><path d="M1260.700 601V606.500M1258 603.700H1263.500" stroke="#cfcfcf"/>
<g fill="none" stroke="#8c8c8c"><path d="M1282 600.500H1291M1283 600.500V609.500H1290V600.500M1285 599H1288M1285.500 602.500V608M1287.500 602.500V608"/></g>
</svg>
</body></html>
